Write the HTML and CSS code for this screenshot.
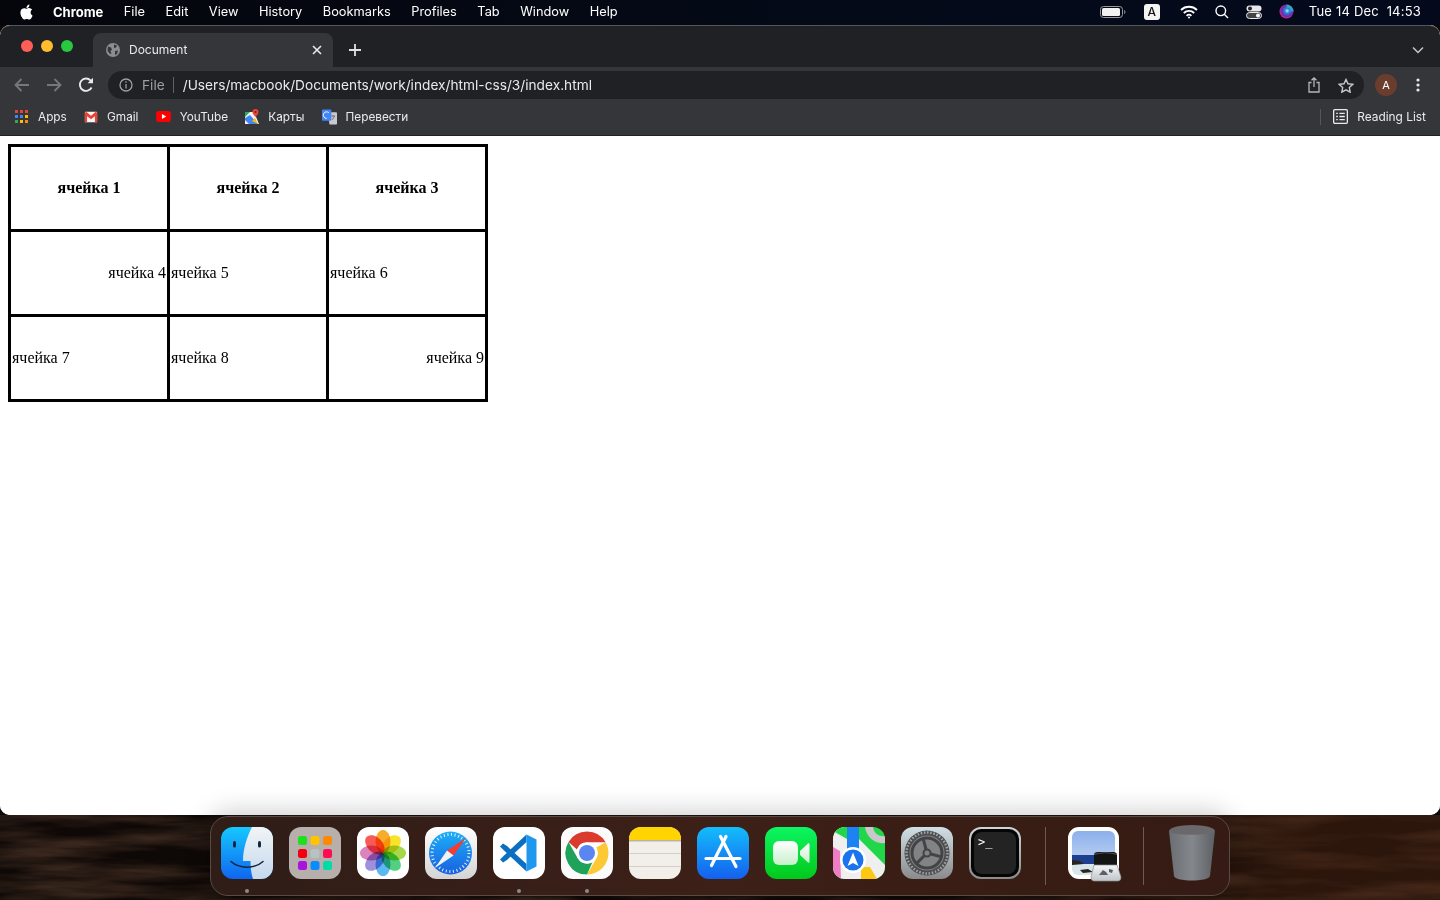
FILE: index.html
```html
<!DOCTYPE html>
<html lang="en">
<head>
    <meta charset="UTF-8">
    <meta name="viewport" content="width=device-width, initial-scale=1.0">
    <title>Document</title>
    <link rel="stylesheet" href="styles.css">
</head>
<body>
    <div class="menubar">
        <svg class="apple" viewBox="0 0 24 24"><path fill="#fff" d="M12.152 6.896c-.948 0-2.415-1.078-3.96-1.04-2.04.027-3.91 1.183-4.961 3.014-2.117 3.675-.546 9.103 1.519 12.09 1.013 1.454 2.208 3.09 3.792 3.039 1.52-.065 2.09-.987 3.935-.987 1.831 0 2.35.987 3.96.948 1.637-.026 2.676-1.48 3.676-2.948 1.156-1.688 1.636-3.325 1.662-3.415-.039-.013-3.182-1.221-3.22-4.857-.026-3.04 2.48-4.494 2.597-4.559-1.429-2.09-3.623-2.324-4.39-2.376-2-.156-3.675 1.09-4.61 1.09zM15.53 3.83c.843-1.012 1.4-2.427 1.245-3.83-1.207.052-2.662.805-3.532 1.818-.78.896-1.454 2.338-1.273 3.714 1.338.104 2.715-.688 3.559-1.701"/></svg>
        <nav class="menu">
            <b>Chrome</b><span>File</span><span>Edit</span><span>View</span><span>History</span><span>Bookmarks</span><span>Profiles</span><span>Tab</span><span>Window</span><span>Help</span>
        </nav>
        <div class="status">
            <svg width="26" height="12" viewBox="0 0 26 12"><rect x="0.5" y="0.5" width="22" height="11" rx="3" fill="none" stroke="#999"/><rect x="2" y="2" width="18" height="8" rx="1.5" fill="#f2f2f2"/><path d="M24 4v4c1-.3 1.5-1 1.5-2s-.5-1.700-1.500-2z" fill="#777"/></svg>
            <span class="input-badge">A</span>
            <svg width="18" height="14" viewBox="0 0 18 14" fill="none" stroke="#fff" stroke-width="1.800"><path d="M1 5a11.500 11.500 0 0 1 16 0"/><path d="M3.800 8a7.500 7.500 0 0 1 10.400 0"/><path d="M6.600 10.800a3.500 3.500 0 0 1 4.800 0"/><circle cx="9" cy="12.500" r="1" fill="#fff" stroke="none"/></svg>
            <svg width="14" height="14" viewBox="0 0 14 14" fill="none" stroke="#fff" stroke-width="1.400"><circle cx="5.800" cy="5.800" r="4.800"/><path d="M9.300 9.300L13 13"/></svg>
            <svg width="16" height="14" viewBox="0 0 16 14"><rect x="0.500" y="0.500" width="15" height="6" rx="3" fill="#e8e8e8"/><circle cx="4" cy="3.500" r="2" fill="#222"/><rect x="0.500" y="7.500" width="15" height="6" rx="3" fill="#444" stroke="#e8e8e8"/><circle cx="12" cy="10.500" r="2" fill="#fff"/></svg>
            <svg width="15" height="15" viewBox="0 0 15 15"><defs><radialGradient id="siri" cx="0.550" cy="0.450" r="0.600"><stop offset="0" stop-color="#bfefff"/><stop offset="0.300" stop-color="#2a80d8"/><stop offset="0.650" stop-color="#6a2ab0"/><stop offset="1" stop-color="#e82a78"/></radialGradient></defs><circle cx="7.500" cy="7.500" r="7" fill="url(#siri)"/><path d="M7.500 .5a7 7 0 0 1 7 7h-3a4 4 0 0 0-4-4z" fill="#20c0c8" opacity="0.800"/></svg>
            <span class="clock">Tue 14 Dec&nbsp; 14:53</span>
        </div>
    </div>

    <div class="window">
        <div class="tabbar">
            <div class="lights"><i class="red"></i><i class="yellow"></i><i class="green"></i></div>
            <div class="tab">
                <svg width="14" height="14" viewBox="0 0 14 14"><circle cx="7" cy="7" r="7" fill="#8a8d92"/><path d="M2 3.500l3 1 1 2-1.500 1.500 1 3-2-.5-2-3zM8 1.500l3 1-1 2-2 .5zM9 8l3-.5-1 3.500-2 1z" fill="#35363a"/></svg>
                <span class="tab-title">Document</span>
                <svg width="10" height="10" viewBox="0 0 10 10" stroke="#e8eaed" stroke-width="1.600"><path d="M1 1l8 8M9 1l-8 8"/></svg>
            </div>
            <svg class="newtab" width="14" height="14" viewBox="0 0 14 14" stroke="#dfe1e5" stroke-width="1.800"><path d="M7 1v12M1 7h12"/></svg>
            <svg class="tabsearch" width="12" height="8" viewBox="0 0 12 8" fill="none" stroke="#c4c7cc" stroke-width="1.500"><path d="M1 1.500l5 5 5-5"/></svg>
        </div>

        <div class="toolbar">
            <svg width="16" height="14" viewBox="0 0 16 14" fill="none" stroke="#74777c" stroke-width="1.800"><path d="M15 7H2M7.500 1L1.500 7l6 6"/></svg>
            <svg width="16" height="14" viewBox="0 0 16 14" fill="none" stroke="#74777c" stroke-width="1.800"><path d="M1 7h13M8.500 1l6 6-6 6"/></svg>
            <svg width="16" height="16" viewBox="0 0 16 16" fill="none" stroke="#e8eaed" stroke-width="1.900"><path d="M13.600 10.500A6.200 6.200 0 1 1 12.500 3.300L14.500 5"/><path d="M15 0.800v5.400H9.600" fill="#e8eaed" stroke="none"/></svg>
            <div class="omnibox">
                <svg width="14" height="14" viewBox="0 0 14 14" fill="none" stroke="#9aa0a6" stroke-width="1.300"><circle cx="7" cy="7" r="6"/><path d="M7 6v4.500M7 3.300v1.400"/></svg>
                <span class="scheme">File</span>
                <span class="url">/Users/macbook/Documents/work/index/html-css/3/index.html</span>
                <svg class="share" width="14" height="16" viewBox="0 0 14 16" fill="none" stroke="#b4b7bc" stroke-width="1.300"><path d="M4.500 5.500H2v9.500h10V5.500H9.500M7 10V1M4.500 3.300L7 1l2.500 2.300"/></svg>
                <svg width="16" height="15" viewBox="0 0 16 15" fill="none" stroke="#c4c7cc" stroke-width="1.400"><path d="M8 1.500l2 4.300 4.700.6-3.400 3.200.9 4.600L8 11.900l-4.200 2.300.9-4.600L1.300 6.400 6 5.800z"/></svg>
            </div>
            <span class="avatar">A</span>
            <svg width="4" height="14" viewBox="0 0 4 14" fill="#e8eaed"><circle cx="2" cy="2" r="1.600"/><circle cx="2" cy="7" r="1.600"/><circle cx="2" cy="12" r="1.600"/></svg>
        </div>

        <div class="bookmarks">
            <a class="mark">
                <svg width="14" height="14" viewBox="0 0 14 14"><g fill="#ea4335"><rect width="3" height="3"/><rect x="5" width="3" height="3"/><rect x="10" width="3" height="3"/></g><g fill="#4285f4"><rect y="5" width="3" height="3"/><rect x="5" y="5" width="3" height="3"/></g><rect x="10" y="5" width="3" height="3" fill="#fbbc04"/><g fill="#34a853"><rect y="10" width="3" height="3"/></g><rect x="5" y="10" width="3" height="3" fill="#fbbc04"/><rect x="10" y="10" width="3" height="3" fill="#fb8c00"/></svg>
                Apps
            </a>
            <a class="mark">
                <svg width="14" height="12" viewBox="0 0 16 12"><rect x="1" width="14" height="12" rx="1" fill="#f5f5f5"/><path d="M1 1.500V12h2.500V5L8 8.500 12.500 5V12H15V1.500L13.500 0 8 4.500 2.500 0z" fill="#ea4335"/></svg>
                Gmail
            </a>
            <a class="mark">
                <svg width="15" height="11" viewBox="0 0 16 12"><rect width="16" height="12" rx="3" fill="#f00"/><path d="M6.300 3.300v5.400L11 6z" fill="#fff"/></svg>
                YouTube
            </a>
            <a class="mark">
                <svg width="14" height="15" viewBox="0 0 14 15"><path d="M0 3h9l5 12H0z" fill="#f4f4f4"/><path d="M0 9l5-3 8 9H4L0 11z" fill="#4285f4"/><path d="M0 3h5L0 8z" fill="#34a853"/><path d="M7 12l3-3 3 6z" fill="#fbbc04"/><path d="M10.500 0a3 3 0 0 1 3 3c0 2-3 5-3 5s-3-3-3-5a3 3 0 0 1 3-3z" fill="#ea4335"/><circle cx="10.500" cy="3" r="1" fill="#8c1c13"/></svg>
                Карты
            </a>
            <a class="mark">
                <svg width="15" height="16" viewBox="0 0 16 16"><path d="M6 3h9a1 1 0 0 1 1 1v11a1 1 0 0 1-1 1H8z" fill="#c7cbd1"/><rect y="0" width="10" height="12" rx="1" fill="#4285f4"/><path d="M5 9.500a3.500 3.500 0 1 1 2.300-6" fill="none" stroke="#fff" stroke-width="1"/><path d="M10 7h4M12 6v1M11 11l2.500-4" stroke="#666" stroke-width="0.900" fill="none"/></svg>
                Перевести
            </a>
            <a class="mark reading">
                <svg width="15" height="15" viewBox="0 0 14 14" fill="none" stroke="#e8eaed" stroke-width="1.200"><rect x="0.600" y="0.600" width="12.800" height="12.800" rx="1"/><path d="M3 4h1.500M3 7h1.500M3 10h1.500M6 4h5M6 7h5M6 10h5"/></svg>
                Reading List
            </a>
        </div>

        <div class="page">
            <table class="grid">
                <tr><th>ячейка 1</th><th>ячейка 2</th><th>ячейка 3</th></tr>
                <tr><td class="right">ячейка 4</td><td>ячейка 5</td><td>ячейка 6</td></tr>
                <tr><td>ячейка 7</td><td>ячейка 8</td><td class="right">ячейка 9</td></tr>
            </table>
        </div>
    </div>

    <div class="desktop">
        <svg class="rock" width="1440" height="90">
            <defs>
                <linearGradient id="tint" x1="0" y1="0" x2="1" y2="0"><stop offset="0.700" stop-color="#4a2412" stop-opacity="0"/><stop offset="0.900" stop-color="#4a2412" stop-opacity="0.500"/></linearGradient>
            </defs>
            <filter id="rocky" x="0" y="0" width="100%" height="100%">
                <feTurbulence type="fractalNoise" baseFrequency="0.007 0.06" numOctaves="4" seed="7"/>
                <feColorMatrix type="matrix" values="0 0 0 0 0.50  0 0 0 0 0.24  0 0 0 0 0.13  1.600 0 0 0 -0.600"/>
            </filter>
            <rect width="1440" height="90" fill="#0e0806"/>
            <rect width="1440" height="90" filter="url(#rocky)" opacity="0.400"/>
            <rect width="1440" height="90" fill="url(#tint)"/>
        </svg>
        <div class="dock">
            <div class="app running">
                <svg viewBox="0 0 52 52"><defs><linearGradient id="fl" x1="0" y1="0" x2="0" y2="1"><stop offset="0" stop-color="#16c8ff"/><stop offset="1" stop-color="#0f66f0"/></linearGradient><linearGradient id="fr" x1="0" y1="0" x2="0" y2="1"><stop offset="0" stop-color="#f2f4f6"/><stop offset="1" stop-color="#c4d8ee"/></linearGradient></defs><rect width="52" height="52" rx="12" fill="url(#fl)"/><path d="M31 0H40A12 12 0 0 1 52 12V40A12 12 0 0 1 40 52H32C30 46 29.500 40 29.500 34H22C22 22 26 10 31 0z" fill="url(#fr)"/><rect x="12" y="14" width="3" height="6.500" rx="1.500" fill="#16263f"/><rect x="37" y="14" width="3" height="6.500" rx="1.500" fill="#16263f"/><path d="M10 34.500C18 42 34 42 42 34.500" fill="none" stroke="#16263f" stroke-width="1.500" stroke-linecap="round"/></svg>
            </div>
            <div class="app">
                <svg viewBox="0 0 52 52"><rect width="52" height="52" rx="12" fill="#b6afab"/><rect x="9" y="9" width="9" height="9" rx="2.500" fill="#1ce21c"/><rect x="21.500" y="9" width="9" height="9" rx="2.500" fill="#ffc400"/><rect x="34" y="9" width="9" height="9" rx="2.500" fill="#ff8a00"/><rect x="9" y="22" width="9" height="9" rx="2.500" fill="#f00010"/><rect x="21.500" y="22" width="9" height="9" rx="2.500" fill="#b9c2c2"/><rect x="34" y="22" width="9" height="9" rx="2.500" fill="#ff0a54"/><rect x="9" y="34" width="9" height="9" rx="2.500" fill="#a814dc"/><rect x="21.500" y="34" width="9" height="9" rx="2.500" fill="#0a8cff"/><rect x="34" y="34" width="9" height="9" rx="2.500" fill="#00dca8"/></svg>
            </div>
            <div class="app">
                <svg viewBox="0 0 52 52"><rect width="52" height="52" rx="12" fill="#fff"/><g class="petals"><ellipse cx="26" cy="14.500" rx="7.500" ry="11.500" fill="#fbab2c"/><ellipse cx="26" cy="14.500" rx="7.500" ry="11.500" fill="#f6e32a" transform="rotate(45 26 26)"/><ellipse cx="26" cy="14.500" rx="7.500" ry="11.500" fill="#a6d84a" transform="rotate(90 26 26)"/><ellipse cx="26" cy="14.500" rx="7.500" ry="11.500" fill="#52cf80" transform="rotate(135 26 26)"/><ellipse cx="26" cy="14.500" rx="7.500" ry="11.500" fill="#5cb8f0" transform="rotate(180 26 26)"/><ellipse cx="26" cy="14.500" rx="7.500" ry="11.500" fill="#9f90dc" transform="rotate(225 26 26)"/><ellipse cx="26" cy="14.500" rx="7.500" ry="11.500" fill="#dc82bc" transform="rotate(270 26 26)"/><ellipse cx="26" cy="14.500" rx="7.500" ry="11.500" fill="#f85a54" transform="rotate(315 26 26)"/></g></svg>
            </div>
            <div class="app">
                <svg viewBox="0 0 52 52"><defs><linearGradient id="sb" x1="0" y1="0" x2="0" y2="1"><stop offset="0" stop-color="#fff"/><stop offset="1" stop-color="#d4d4d4"/></linearGradient><linearGradient id="sc" x1="0" y1="0" x2="0" y2="1"><stop offset="0" stop-color="#1cb0f6"/><stop offset="1" stop-color="#1a5fe0"/></linearGradient></defs><rect width="52" height="52" rx="12" fill="url(#sb)"/><circle cx="25.500" cy="26" r="21.500" fill="url(#sc)"/><circle cx="25.500" cy="26" r="18.500" fill="none" stroke="#dff0ff" stroke-width="3" stroke-dasharray="1 2.630"/><path d="M41 11L22 23.500 28.500 28.500z" fill="#f23d30"/><path d="M10 41L22 23.500 28.500 28.500z" fill="#f2f2f2"/></svg>
            </div>
            <div class="app running">
                <svg viewBox="0 0 52 52"><rect width="52" height="52" rx="12" fill="#fff"/><path d="M33.500 7.500L10.500 29 7 32.500 10 35.500 14 33 33.500 15z" fill="#0a6fc2"/><path d="M33.500 44.500L10.500 23 7 19.500 10 16.500 14 19 33.500 37z" fill="#0a6fc2"/><path d="M33.500 7.500L43.500 12.500V39.500L33.500 44.500z" fill="#1e98ef"/></svg>
            </div>
            <div class="app running">
                <svg viewBox="0 0 52 52"><rect width="52" height="52" rx="12" fill="#fbfbfb"/><path d="M26 4.500A21.500 21.500 0 0 1 44.600 15.300H26A10.700 10.700 0 0 0 16 22.500L7.500 15A21.500 21.500 0 0 1 26 4.500z" fill="#db3a2e"/><path d="M44.600 15.300A21.500 21.500 0 0 1 26 47.500L35.300 31.400A10.700 10.700 0 0 0 35.300 20.600z" fill="#fcc934"/><path d="M7.500 15L16.800 31.400A10.700 10.700 0 0 0 31.400 35.300L26 47.500A21.500 21.500 0 0 1 7.500 15z" fill="#1fa35a"/><circle cx="26" cy="26" r="10.500" fill="#fff"/><circle cx="26" cy="26" r="8" fill="#5a86f2"/></svg>
            </div>
            <div class="app">
                <svg viewBox="0 0 52 52"><defs><clipPath id="nc"><rect width="52" height="52" rx="12"/></clipPath></defs><g clip-path="url(#nc)"><rect width="52" height="52" fill="#f2efea"/><rect width="52" height="13" fill="#ffd400"/><rect y="13" width="52" height="1.500" fill="#b8b4a8"/><rect y="26" width="52" height="1" fill="#d4d0c8"/><rect y="39" width="52" height="1" fill="#d4d0c8"/></g></svg>
            </div>
            <div class="app">
                <svg viewBox="0 0 52 52"><defs><linearGradient id="as" x1="0" y1="0" x2="0" y2="1"><stop offset="0" stop-color="#13bdfb"/><stop offset="1" stop-color="#1560ee"/></linearGradient></defs><rect width="52" height="52" rx="12" fill="url(#as)"/><g stroke="#fff" stroke-width="3.200" stroke-linecap="round"><path d="M29 9.500L14.500 38.500"/><path d="M23.500 9.500L39 39.500"/><path d="M9 31.500H43"/></g></svg>
            </div>
            <div class="app">
                <svg viewBox="0 0 52 52"><defs><linearGradient id="ft" x1="0" y1="0" x2="0" y2="1"><stop offset="0" stop-color="#0cf662"/><stop offset="1" stop-color="#02c81a"/></linearGradient><linearGradient id="fc" x1="0" y1="0" x2="0" y2="1"><stop offset="0" stop-color="#fff"/><stop offset="1" stop-color="#c8f0cc"/></linearGradient></defs><rect width="52" height="52" rx="12" fill="url(#ft)"/><rect x="8" y="14" width="25" height="24" rx="6" fill="url(#fc)"/><path d="M35 24L43 16.500Q44.500 15.500 44.500 17.500V34.500Q44.500 36.500 43 35.500L35 28z" fill="url(#fc)"/></svg>
            </div>
            <div class="app">
                <svg viewBox="0 0 52 52"><defs><clipPath id="mc"><rect width="52" height="52" rx="12"/></clipPath></defs><g clip-path="url(#mc)"><rect width="52" height="52" fill="#22d64a"/><path d="M0 0H14L52 38V52H0z" fill="#f0eff0"/><path d="M0 0H14V12L0 4z" fill="#22d64a"/><path d="M0 20L7 24 8 52H0z" fill="#f07cc4"/><path d="M28 40H37L44 52H28z" fill="#fbc913"/><rect x="14" y="0" width="12" height="32" fill="#1b84f2"/><path d="M32 0A18 18 0 0 0 52 16V9A10 10 0 0 1 40 0z" fill="#c9c7cc"/><circle cx="20" cy="33" r="13" fill="#fff"/><circle cx="20" cy="33" r="10.500" fill="#1b74ee"/><path d="M20 25.500L25.500 39 20 36 14.500 39z" fill="#fff"/></g></svg>
            </div>
            <div class="app">
                <svg viewBox="0 0 52 52"><defs><linearGradient id="sg" x1="0" y1="0" x2="0" y2="1"><stop offset="0" stop-color="#d0e0e6"/><stop offset="1" stop-color="#8a8a8c"/></linearGradient></defs><rect width="52" height="52" rx="12" fill="url(#sg)"/><circle cx="26" cy="26" r="22.500" fill="#4c4d4f"/><circle cx="26" cy="26" r="20.500" fill="none" stroke="#a0a1a3" stroke-width="2.500" stroke-dasharray="1.600 1.600"/><circle cx="26" cy="26" r="17.500" fill="#828385"/><circle cx="26" cy="26" r="15" fill="none" stroke="#434446" stroke-width="3"/><g stroke="#434446" stroke-width="3" transform="rotate(-15 26 26)"><path d="M26 26V11"/><path d="M26 26L13 33.500"/><path d="M26 26L39 33.500"/></g><circle cx="26" cy="26" r="4.500" fill="#434446"/><circle cx="26" cy="26" r="2.500" fill="#828385"/></svg>
            </div>
            <div class="app">
                <svg viewBox="0 0 52 52"><defs><linearGradient id="tb" x1="0" y1="0" x2="0" y2="1"><stop offset="0" stop-color="#cfd6d8"/><stop offset="1" stop-color="#8a8c8e"/></linearGradient></defs><rect width="52" height="52" rx="12" fill="url(#tb)"/><rect x="2" y="2" width="48" height="48" rx="10" fill="#050505"/><rect x="5" y="5" width="42" height="42" rx="8" fill="#232323"/><text class="prompt" x="9" y="19">&gt;_</text></svg>
            </div>
            <span class="sep"></span>
            <div class="app">
                <svg class="overflow" viewBox="0 0 52 52"><defs><linearGradient id="pv" x1="0" y1="0" x2="0" y2="1"><stop offset="0" stop-color="#8cb0ec"/><stop offset="1" stop-color="#b4ccf0"/></linearGradient><clipPath id="pc"><rect x="4" y="4" width="43" height="44" rx="6"/></clipPath><linearGradient id="ink" x1="0" y1="0" x2="0" y2="1"><stop offset="0" stop-color="#f4f6f8"/><stop offset="1" stop-color="#c0c4c8"/></linearGradient></defs><rect width="51" height="52" rx="11" fill="#fff"/><g clip-path="url(#pc)"><rect x="4" y="4" width="43" height="26" fill="url(#pv)"/><rect x="4" y="28" width="43" height="9" fill="#1e3f90"/><rect x="4" y="37" width="43" height="11" fill="#d8e6ea"/><path d="M4 33l8 1 4 3-12 1zM12 43l8-1 5 3-10 1z" fill="#2a2420"/></g><path d="M26 28Q26 25 30 25H45Q49 25 49 28V38H26z" fill="#141414"/><path d="M26 27.500Q37.500 24 49 27.500" fill="none" stroke="#555" stroke-width="1"/><path d="M26 38H49L53 50Q53 54 50 54H26Q23 54 23 50z" fill="url(#ink)" stroke="#8a8e92" stroke-width="0.700"/><path d="M31 48l4-5 3 2 2 3zM41 42l4 1-1 3-3-1z" fill="#5a6068"/></svg>
            </div>
            <span class="sep sep-trash"></span>
            <div class="app trash">
                <svg viewBox="0 0 52 60"><defs><linearGradient id="tr" x1="0" y1="0" x2="1" y2="0"><stop offset="0" stop-color="#6a6e72"/><stop offset="0.500" stop-color="#84888c"/><stop offset="1" stop-color="#5c6064"/></linearGradient></defs><ellipse cx="26" cy="7" rx="23" ry="6" fill="#6a686a"/><path d="M3 7C5 12 47 12 49 7L44 52C43 58 9 58 8 52z" fill="url(#tr)"/></svg>
            </div>
        </div>
    </div>
</body>
</html>
```

FILE: styles.css
```css
@charset "utf-8";
* {
    margin: 0;
    padding: 0;
    box-sizing: border-box;
}
html, body {
    height: 900px;
    overflow: hidden;
}
body {
    display: flex;
    flex-direction: column;
    background-color: #0e0806;
    font-family: Inter, "Liberation Sans", sans-serif;
    color: #fff;
}
svg {
    display: block;
    flex: none;
}

/* top menu bar */
.menubar {
    display: flex;
    align-items: center;
    height: 25px;
    flex: none;
    padding: 0 19px 2px;
    background: linear-gradient(90deg, #05060c, #040a18 60%, #040a1c);
    font-size: 12.800px;
}
.apple {
    width: 15px;
    height: 16px;
    margin-right: 19px;
}
.menu {
    display: flex;
    gap: 20.500px;
}
.menu b {
    font-size: 13px;
    font-weight: 700;
}
.status {
    display: flex;
    align-items: center;
    gap: 17px;
    margin-left: auto;
}
.input-badge {
    display: flex;
    align-items: center;
    justify-content: center;
    width: 16px;
    height: 16px;
    margin-left: 1px;
    margin-right: 3px;
    border-radius: 3px;
    background: #f4f4f4;
    color: #111;
    font-size: 12px;
    font-weight: 500;
}
.clock {
    margin-left: -2px;
    padding-bottom: 1px;
    font-size: 13px;
    letter-spacing: 0.200px;
}

/* browser window */
.window {
    display: flex;
    flex-direction: column;
    height: 790px;
    flex: none;
    border-radius: 10px;
    overflow: hidden;
    background: #fff;
}
.tabbar {
    display: flex;
    align-items: flex-end;
    height: 42px;
    flex: none;
    background: #202124;
    border-top: 1px solid #55565a;
    border-radius: 10px 10px 0 0;
}
.lights {
    display: flex;
    gap: 8px;
    align-self: flex-start;
    margin: 14px 20px 0 21px;
}
.lights i {
    width: 12px;
    height: 12px;
    border-radius: 50%;
}
.red { background: #ff5f57; }
.yellow { background: #febc2e; }
.green { background: #28c840; }
.tab {
    display: flex;
    align-items: center;
    width: 240px;
    height: 34px;
    padding: 0 11px 1px 13px;
    border-radius: 8px 8px 0 0;
    background: #35363a;
    font-size: 12px;
    color: #e8eaed;
}
.tab-title {
    margin-left: 9px;
    margin-right: auto;
}
.newtab {
    align-self: center;
    margin: 6px 0 0 15px;
}
.tabsearch {
    align-self: center;
    margin: 6px 16px 0 auto;
}

.toolbar {
    display: flex;
    align-items: center;
    height: 36px;
    flex: none;
    padding: 0 20px 0 14px;
    gap: 16px;
    background: #35363a;
}
.omnibox {
    display: flex;
    align-items: center;
    flex: 1;
    height: 28px;
    margin-left: -2px;
    padding: 0 10px 0 11px;
    border-radius: 14px;
    background: #202124;
    font-size: 13.700px;
    color: #e8eaed;
}
.scheme {
    margin-left: 9px;
    padding-right: 8px;
    border-right: 1px solid #5f6368;
    color: #9aa0a6;
    line-height: 16px;
}
.url {
    margin-left: 9px;
    margin-right: auto;
}
.share {
    margin-right: 17px;
}
.avatar {
    display: flex;
    align-items: center;
    justify-content: center;
    width: 22px;
    height: 22px;
    margin-left: -5px;
    margin-right: 3px;
    border-radius: 50%;
    background: #6b3d2f;
    font-size: 11px;
}

.bookmarks {
    display: flex;
    align-items: center;
    height: 33px;
    flex: none;
    padding: 0 14px 5px 15px;
    gap: 17.200px;
    background: #35363a;
    border-bottom: 1px solid #202124;
    font-size: 11.800px;
    color: #e8eaed;
}
.mark {
    display: flex;
    align-items: center;
    gap: 9px;
}
.reading {
    height: 16px;
    margin-left: auto;
    padding-left: 12px;
    border-left: 1px solid #55565a;
    font-size: 11.900px;
}

/* page content */
.page {
    flex: 1;
    padding: 8px;
    background: #fff;
    font-family: "Liberation Serif", serif;
    font-size: 16px;
    color: #000;
}
.grid {
    width: 480px;
    height: 258px;
    border-collapse: collapse;
    border: 3px solid #000;
}
.grid th, .grid td {
    width: 159px;
    height: 85px;
    border: 3px solid #000;
    padding: 1px;
    text-align: left;
}
.grid th {
    text-align: center;
}
.grid .right {
    text-align: right;
}

/* dock and wallpaper */
.desktop {
    position: relative;
    flex: 1;
    display: flex;
    justify-content: center;
    align-items: flex-start;
}
.rock {
    position: absolute;
    left: 0;
    top: 0;
}
.dock {
    position: relative;
    display: flex;
    align-items: flex-start;
    gap: 16px;
    width: 1020px;
    height: 80px;
    margin-top: 1px;
    padding: 10px 0 0 10px;
    border: 1px solid #5a4a44;
    border-radius: 18px;
    background: linear-gradient(90deg, #2f1d17, #3d2018 50%, #351b13);
    box-shadow: 0 -4px 26px rgba(0, 0, 0, 0.200);
}
.app {
    position: relative;
    width: 52px;
    height: 52px;
    flex: none;
}
.app svg {
    width: 52px;
    height: 52px;
}
.app svg.overflow {
    overflow: visible;
}
.petals {
    isolation: isolate;
}
.petals ellipse {
    mix-blend-mode: multiply;
}
.app.running::after {
    content: "";
    position: absolute;
    left: 24px;
    top: 62px;
    width: 4px;
    height: 4px;
    border-radius: 50%;
    background: #8f8a88;
}
.sep {
    width: 1px;
    height: 58px;
    flex: none;
    margin: 0 6px 0 8px;
    background: #6d5a52;
}
.sep-trash {
    margin: 0 6px 0 7px;
}
.trash {
    height: 60px;
    margin-top: -3px;
}
.trash svg {
    height: 60px;
}
.prompt {
    font-family: "DejaVu Sans Mono", monospace;
    font-size: 12px;
    fill: #fff;
}
```
